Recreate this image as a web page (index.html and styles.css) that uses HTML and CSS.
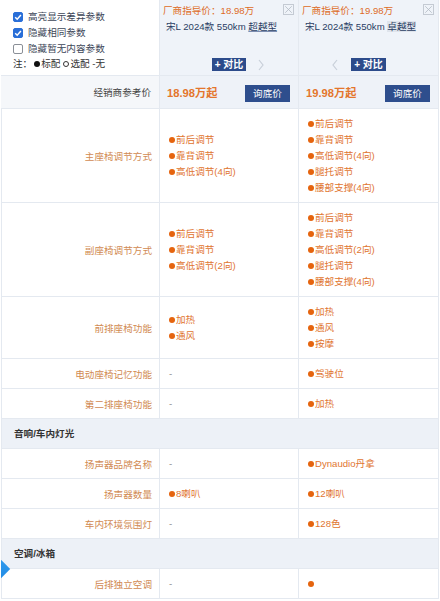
FILE: index.html
```html
<!DOCTYPE html>
<html lang="zh">
<head>
<meta charset="utf-8">
<title>参数对比</title>
<link rel="stylesheet" href="styles.css">
</head>
<body>
<div class="page">
  <div class="row head">
    <div class="cell opts">
      <div class="opt"><span class="cb on"><svg viewBox="0 0 10 10" width="10" height="10"><path d="M2.2 5.2 L4.2 7.2 L7.9 3" fill="none" stroke="#fff" stroke-width="1.5"/></svg></span>高亮显示差异参数</div>
      <div class="opt"><span class="cb on"><svg viewBox="0 0 10 10" width="10" height="10"><path d="M2.2 5.2 L4.2 7.2 L7.9 3" fill="none" stroke="#fff" stroke-width="1.5"/></svg></span>隐藏相同参数</div>
      <div class="opt"><span class="cb"></span>隐藏暂无内容参数</div>
      <div class="note">注：<span class="bd"></span>标配 <span class="bo"></span>选配 -无</div>
    </div>
    <div class="cell car">
      <div class="guide">厂商指导价：18.98万</div>
      <div class="name">宋L 2024款 550km <span class="ul">超越型</span></div>
      <div class="cmp">
        <span class="side left"></span>
        <span class="btn-cmp">+ 对比</span>
        <span class="side right"><svg viewBox="0 0 6 12" width="6" height="12"><polyline points="1,1 5,6 1,11" fill="none" stroke="#c8cfd9" stroke-width="1.2"/></svg></span>
      </div>
      <span class="close"><svg viewBox="0 0 11 11" width="11" height="11"><path d="M1.5 1.5 L9.5 9.5 M9.5 1.5 L1.5 9.5" stroke="#b4bbc5" stroke-width="1"/></svg></span>
    </div>
    <div class="cell car">
      <div class="guide">厂商指导价：19.98万</div>
      <div class="name">宋L 2024款 550km <span class="sel">卓越型</span></div>
      <div class="cmp">
        <span class="side left"><svg viewBox="0 0 6 12" width="6" height="12"><polyline points="5,1 1,6 5,11" fill="none" stroke="#c8cfd9" stroke-width="1.2"/></svg></span>
        <span class="btn-cmp">+ 对比</span>
        <span class="side right"></span>
      </div>
      <span class="close"><svg viewBox="0 0 11 11" width="11" height="11"><path d="M1.5 1.5 L9.5 9.5 M9.5 1.5 L1.5 9.5" stroke="#b4bbc5" stroke-width="1"/></svg></span>
    </div>
  </div>

  <div class="row price">
    <div class="cell plabel">经销商参考价</div>
    <div class="cell pval"><span class="amt">18.98万起</span><span class="ask">询底价</span></div>
    <div class="cell pval"><span class="amt">19.98万起</span><span class="ask">询底价</span></div>
  </div>

  <div class="row body">
    <div class="cell label">主座椅调节方式</div>
    <div class="cell val">
      <div class="it"><i></i>前后调节</div>
      <div class="it"><i></i>靠背调节</div>
      <div class="it"><i></i>高低调节(4向)</div>
    </div>
    <div class="cell val">
      <div class="it"><i></i>前后调节</div>
      <div class="it"><i></i>靠背调节</div>
      <div class="it"><i></i>高低调节(4向)</div>
      <div class="it"><i></i>腿托调节</div>
      <div class="it"><i></i>腰部支撑(4向)</div>
    </div>
  </div>

  <div class="row body">
    <div class="cell label">副座椅调节方式</div>
    <div class="cell val">
      <div class="it"><i></i>前后调节</div>
      <div class="it"><i></i>靠背调节</div>
      <div class="it"><i></i>高低调节(2向)</div>
    </div>
    <div class="cell val">
      <div class="it"><i></i>前后调节</div>
      <div class="it"><i></i>靠背调节</div>
      <div class="it"><i></i>高低调节(2向)</div>
      <div class="it"><i></i>腿托调节</div>
      <div class="it"><i></i>腰部支撑(4向)</div>
    </div>
  </div>

  <div class="row body">
    <div class="cell label">前排座椅功能</div>
    <div class="cell val">
      <div class="it"><i></i>加热</div>
      <div class="it"><i></i>通风</div>
    </div>
    <div class="cell val">
      <div class="it"><i></i>加热</div>
      <div class="it"><i></i>通风</div>
      <div class="it"><i></i>按摩</div>
    </div>
  </div>

  <div class="row body">
    <div class="cell label">电动座椅记忆功能</div>
    <div class="cell val"><div class="it none">-</div></div>
    <div class="cell val"><div class="it"><i></i>驾驶位</div></div>
  </div>

  <div class="row body">
    <div class="cell label">第二排座椅功能</div>
    <div class="cell val"><div class="it none">-</div></div>
    <div class="cell val"><div class="it"><i></i>加热</div></div>
  </div>

  <div class="section">音响/车内灯光</div>

  <div class="row body">
    <div class="cell label">扬声器品牌名称</div>
    <div class="cell val"><div class="it none">-</div></div>
    <div class="cell val"><div class="it"><i></i>Dynaudio丹拿</div></div>
  </div>

  <div class="row body">
    <div class="cell label">扬声器数量</div>
    <div class="cell val"><div class="it"><i></i>8喇叭</div></div>
    <div class="cell val"><div class="it"><i></i>12喇叭</div></div>
  </div>

  <div class="row body">
    <div class="cell label">车内环境氛围灯</div>
    <div class="cell val"><div class="it none">-</div></div>
    <div class="cell val"><div class="it"><i></i>128色</div></div>
  </div>

  <div class="section">空调/冰箱</div>

  <div class="row body">
    <div class="cell label">后排独立空调</div>
    <div class="cell val"><div class="it none">-</div></div>
    <div class="cell val"><div class="it"><i></i></div></div>
  </div>

  <span class="tab"></span>
</div>
</body>
</html>
```

FILE: styles.css
```css
html, body {
  margin: 0;
  padding: 0;
  background: #fff;
}

body {
  font-family: "Liberation Sans", "Noto Sans CJK SC", sans-serif;
  font-size: 9.6px;
  color: #333;
}

.page {
  position: relative;
  width: 438px;
  height: 601px;
  margin-left: 1px;
  overflow: hidden;
}

.row {
  display: grid;
  grid-template-columns: 159px 139px 140px;
  border-bottom: 1px solid #e4e9f0;
}

.cell {
  border-right: 1px solid #e4e9f0;
}

/* header */
.head {
  height: 76px;
  box-sizing: border-box;
}

.opts {
  padding: 9px 0 0 12px;
  background: #fff;
}

.opt {
  display: flex;
  align-items: center;
  height: 16px;
  line-height: 16px;
  color: #3c4657;
}

.cb {
  width: 10px;
  height: 10px;
  box-sizing: border-box;
  border: 1px solid #8a8f97;
  border-radius: 2px;
  margin-right: 5px;
  display: flex;
  background: #fff;
}

.cb.on {
  background: #2a6fd8;
  border-color: #2a6fd8;
}

.cb svg {
  margin: -1px;
}

.note {
  display: flex;
  align-items: center;
  height: 12px;
  line-height: 12px;
  color: #333;
  margin-top: 1px;
}

.bd, .bo {
  width: 6px;
  height: 6px;
  border-radius: 50%;
  box-sizing: border-box;
  margin: 0 1px 0 2px;
}

.bd {
  background: #111;
}

.bo {
  border: 1px solid #333;
  margin-left: 3px;
}

.car {
  position: relative;
  background: #eff3f9;
  padding: 3px 3px 0 3px;
  display: flex;
  flex-direction: column;
}

.guide {
  line-height: 16px;
  color: #de6c26;
}

.name {
  line-height: 16px;
  margin-left: 3px;
  color: #2a3d63;
}

.ul {
  text-decoration: underline;
  text-decoration-color: #7c8db0;
}

.sel {
  background: #dfe4ec;
}

.cmp {
  margin-top: 23px;
  display: grid;
  grid-template-columns: 1fr auto 1fr;
  align-items: center;
  height: 13px;
}

.btn-cmp {
  background: #2c4b8b;
  color: #fff;
  font-weight: bold;
  font-size: 10px;
  line-height: 13px;
  height: 13px;
  padding: 0 3px;
  white-space: nowrap;
}

.side {
  display: flex;
  height: 12px;
}

.side.left {
  justify-content: flex-end;
  padding-right: 13px;
}

.side.right {
  justify-content: flex-start;
  padding-left: 12px;
}

.close {
  position: absolute;
  top: 4px;
  right: 4px;
  width: 11px;
  height: 11px;
  box-sizing: border-box;
  border: 1px solid #c4cad3;
  display: flex;
  align-items: center;
  justify-content: center;
}

.close svg {
  width: 9px;
  height: 9px;
}

/* price row */
.price {
  height: 33px;
  box-sizing: border-box;
}

.plabel {
  background: #f5f7fa;
  display: flex;
  align-items: center;
  justify-content: flex-end;
  padding-right: 8px;
  color: #444;
}

.pval {
  background: #eef2f8;
  display: flex;
  align-items: center;
  justify-content: space-between;
  padding: 0 8px 0 7px;
}

.amt {
  color: #e4762c;
  font-weight: bold;
  font-size: 11.2px;
}

.ask {
  background: #2e4e8d;
  color: #fff;
  width: 45px;
  height: 17px;
  line-height: 17px;
  text-align: center;
  margin-top: 2px;
}

/* body rows */
.body .label {
  border-left: 1px solid #e4e9f0;
  display: flex;
  align-items: center;
  justify-content: flex-end;
  padding-right: 7px;
  color: #d18a52;
}

.val {
  padding: 7px 4px 6px 9px;
  display: flex;
  flex-direction: column;
  justify-content: center;
}

.it {
  display: flex;
  align-items: center;
  height: 16px;
  line-height: 16px;
  color: #df7530;
  white-space: nowrap;
}

.it i {
  width: 6px;
  height: 6px;
  border-radius: 50%;
  background: #e5640e;
  margin-right: 1px;
  flex: none;
}

.it.none {
  color: #8c8c8c;
}

.section {
  height: 30px;
  box-sizing: border-box;
  line-height: 29px;
  border-bottom: 1px solid #e4e9f0;
  border-left: 1px solid #e4e9f0;
  border-right: 1px solid #e4e9f0;
  background: #edf1f7;
  padding-left: 12px;
  font-weight: bold;
  color: #333;
}

.tab {
  position: absolute;
  left: -27px;
  top: 554px;
  width: 30px;
  height: 30px;
  background: linear-gradient(135deg, #3aa2f2, #1784e0);
  transform: rotate(45deg);
}
```
